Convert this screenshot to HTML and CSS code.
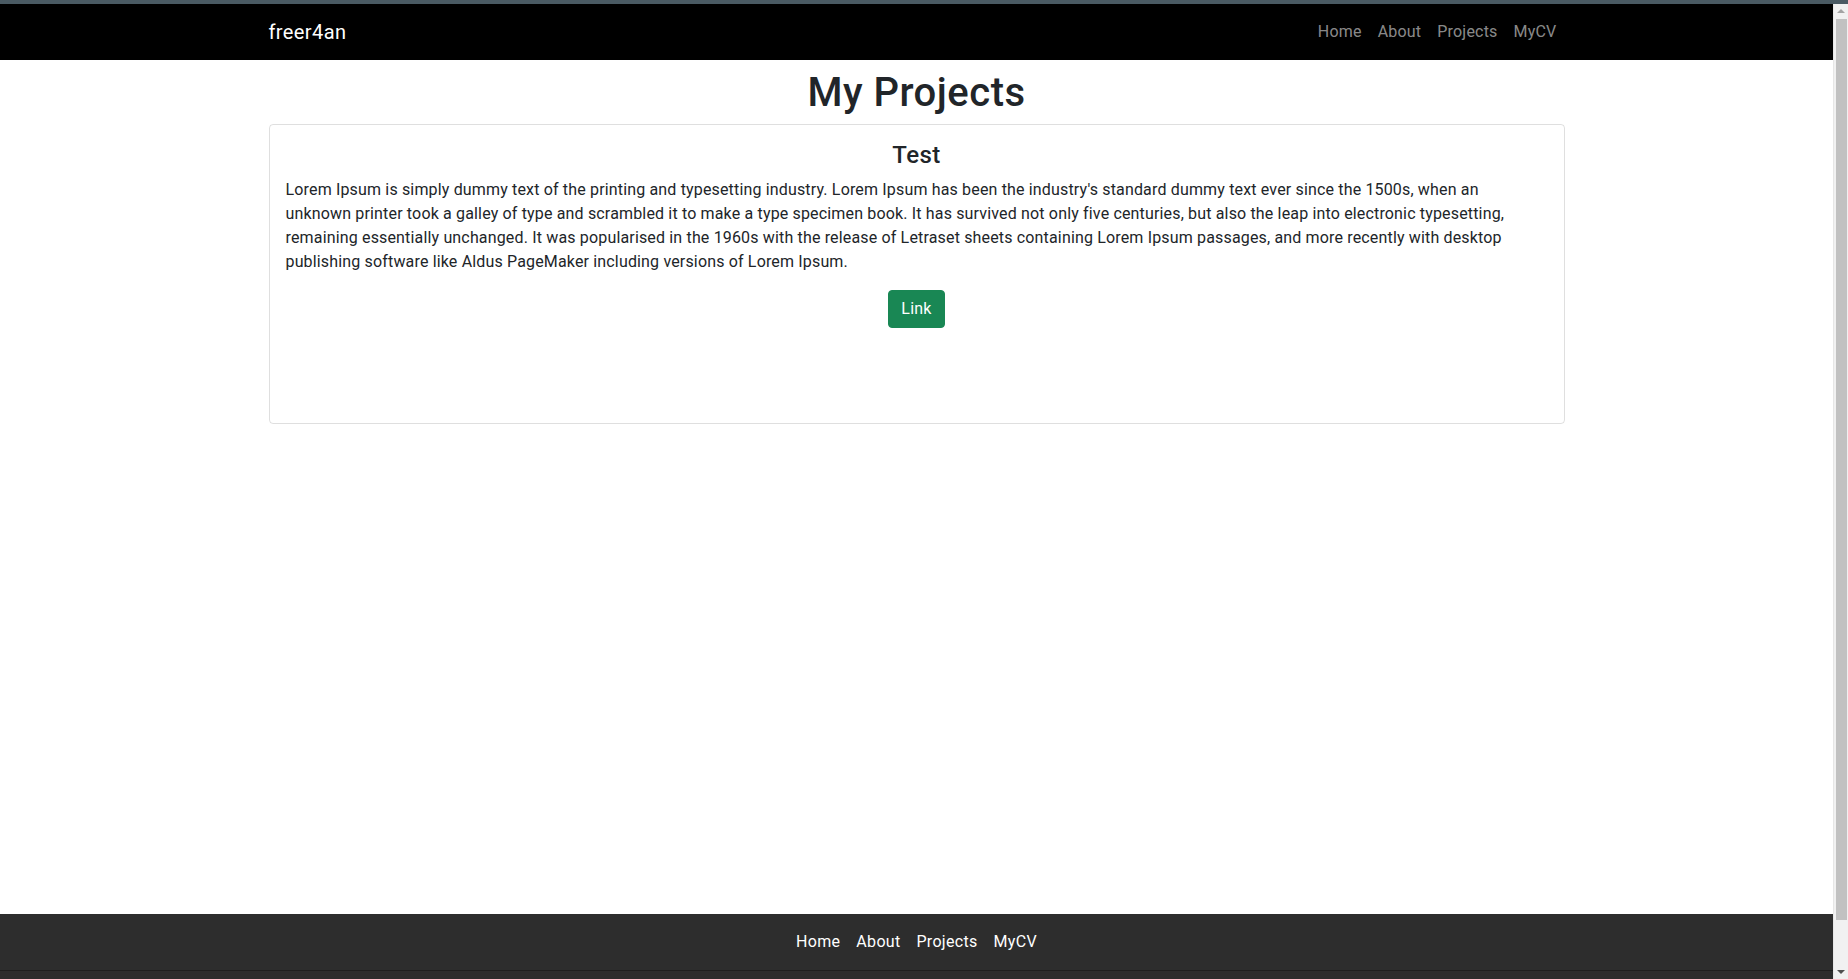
FILE: index.html
```html
<!DOCTYPE html>
<html lang="en">
<head>
<meta charset="utf-8">
<title>My Projects</title>
<link rel="stylesheet" href="styles.css">
</head>
<body>
<div class="top-strip"></div>
<div class="page">
  <nav class="navbar">
    <div class="container nav-inner">
      <a class="brand" href="#">freer4an</a>
      <ul class="nav-links">
        <li><a href="#">Home</a></li>
        <li><a href="#">About</a></li>
        <li><a href="#">Projects</a></li>
        <li><a href="#">MyCV</a></li>
      </ul>
    </div>
  </nav>
  <main class="main">
    <div class="container">
      <h1 class="page-title">My Projects</h1>
      <div class="card">
        <div class="card-body">
          <h4 class="card-title">Test</h4>
          <p class="card-text">Lorem Ipsum is simply dummy text of the printing and typesetting industry. Lorem Ipsum has been the industry's standard dummy text ever since the 1500s, when an unknown printer took a galley of type and scrambled it to make a type specimen book. It has survived not only five centuries, but also the leap into electronic typesetting, remaining essentially unchanged. It was popularised in the 1960s with the release of Letraset sheets containing Lorem Ipsum passages, and more recently with desktop publishing software like Aldus PageMaker including versions of Lorem Ipsum.</p>
          <div class="actions"><a class="btn-success" href="#">Link</a></div>
        </div>
      </div>
    </div>
  </main>
  <footer class="footer">
    <ul class="footer-links">
      <li><a href="#">Home</a></li>
      <li><a href="#">About</a></li>
      <li><a href="#">Projects</a></li>
      <li><a href="#">MyCV</a></li>
    </ul>
  </footer>
</div>
<div class="scrollbar" aria-hidden="true">
  <span class="arrow-up"></span>
  <span class="thumb"></span>
  <span class="arrow-down"></span>
</div>
</body>
</html>
```
FILE: styles.css
```css
* { box-sizing: border-box; }

body {
  margin: 0;
  font-family: Roboto, "Liberation Sans", sans-serif;
  font-size: 16px;
  line-height: 1.5;
  color: #212529;
  background: #fff;
}

a { text-decoration: none; }

.top-strip {
  height: 4px;
  background: #4a5a63;
}

.page {
  margin-right: 15px;
}

.container {
  width: 100%;
  max-width: 1320px;
  margin: 0 auto;
  padding: 0 12px;
}

.navbar {
  background: #000;
  height: 56px;
  display: flex;
  align-items: center;
}

.nav-inner {
  display: flex;
  align-items: center;
  justify-content: space-between;
}

.brand {
  color: #fff;
  font-size: 20px;
  line-height: 30px;
  padding: 5px 0;
  letter-spacing: 0.4px;
}

.nav-links {
  display: flex;
  list-style: none;
  margin: 0;
  padding: 0;
}

.nav-links a {
  display: block;
  padding: 8px;
  color: rgba(255, 255, 255, 0.55);
  letter-spacing: 0.2px;
}

.main {
  min-height: 854px;
  padding-top: 9px;
}

.page-title {
  margin: 0 0 7px;
  text-align: center;
  font-size: 40px;
  font-weight: 500;
  line-height: 1.2;
  letter-spacing: 0.5px;
}

.card {
  height: 300px;
  border: 1px solid rgba(0, 0, 0, 0.125);
  border-radius: 4px;
}

.card-body {
  padding: 16px;
}

.card-title {
  margin: 0 0 8px;
  text-align: center;
  font-size: 24px;
  font-weight: 500;
  line-height: 1.2;
  letter-spacing: 0.4px;
}

.card-text {
  margin: 0 10px 16px 0;
  letter-spacing: 0.16px;
}

.actions {
  text-align: center;
}

.btn-success {
  display: inline-block;
  padding: 6px 12px;
  border: 1px solid #198754;
  border-radius: 4px;
  background: #198754;
  color: #fff;
  line-height: 24px;
  letter-spacing: 0.2px;
}

.footer {
  background: #2d2d2d;
  padding: 16px 0 56px;
}

.footer-links {
  display: flex;
  justify-content: center;
  list-style: none;
  margin: 0;
  padding: 0 0 16px;
  border-bottom: 1px solid #1f1f1f;
}

.footer-links a {
  display: block;
  padding: 0 8px;
  color: #fff;
  letter-spacing: 0.3px;
}

.scrollbar {
  position: fixed;
  top: 4px;
  right: 0;
  bottom: 0;
  width: 15px;
  background: #f1f1f1;
  border-left: 1px solid #e6e6e6;
}

.thumb {
  position: absolute;
  top: 15px;
  bottom: 59px;
  left: 2px;
  width: 11px;
  background: #c1c1c1;
}

.arrow-up,
.arrow-down {
  position: absolute;
  left: 3px;
  width: 0;
  height: 0;
  border-left: 4px solid transparent;
  border-right: 4px solid transparent;
}

.arrow-up {
  top: 5px;
  border-bottom: 4px solid #a3a3a3;
}

.arrow-down {
  bottom: 5px;
  border-top: 4px solid #505050;
}
```
